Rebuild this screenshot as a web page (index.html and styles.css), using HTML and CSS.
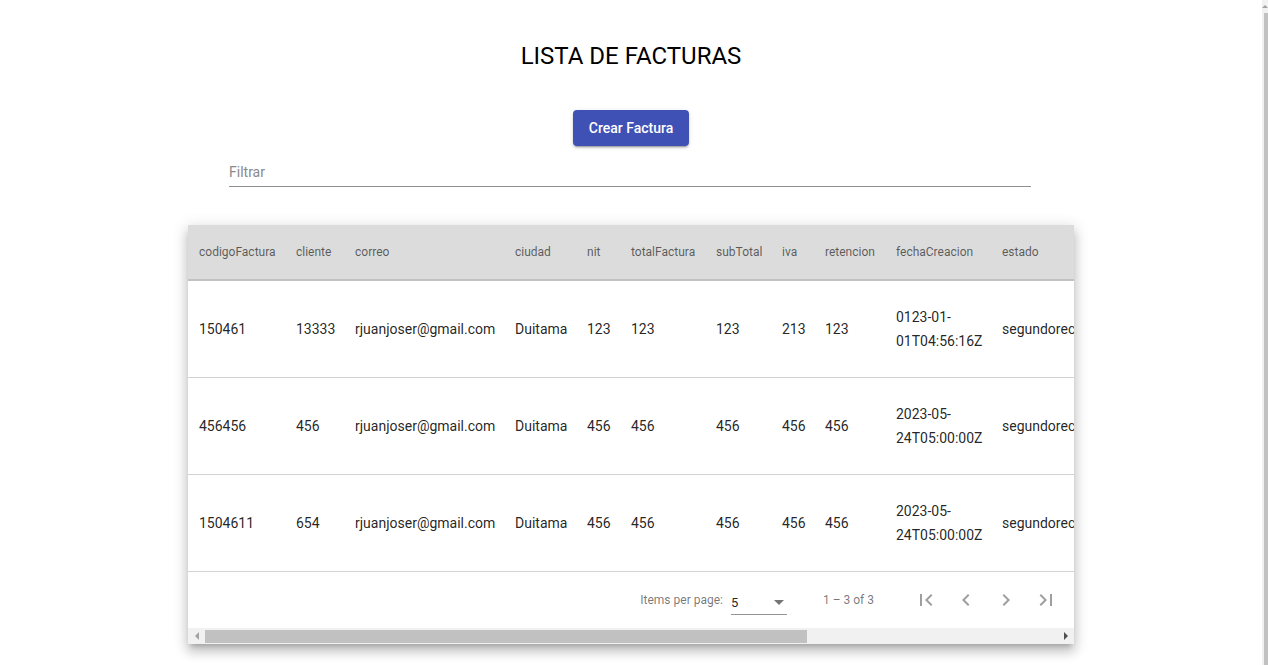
FILE: index.html
```html
<!DOCTYPE html>
<html lang="es">
<head>
<meta charset="utf-8">
<title>Lista de facturas</title>
<link rel="stylesheet" href="styles.css">
</head>
<body>
<div class="page">
  <main class="main">
    <h1 class="title">LISTA DE FACTURAS</h1>
    <button class="btn" type="button">Crear Factura</button>
    <div class="filter"><input class="filter-input" type="text" placeholder="Filtrar"></div>
    <div class="card">
      <div class="table-viewport">
        <table class="tbl">
          <colgroup>
            <col class="c1"><col class="c2"><col class="c3"><col class="c4"><col class="c5"><col class="c6"><col class="c7"><col class="c8"><col class="c9"><col class="c10"><col class="c11">
          </colgroup>
          <thead>
            <tr>
              <th>codigoFactura</th><th>cliente</th><th>correo</th><th>ciudad</th><th>nit</th><th>totalFactura</th><th>subTotal</th><th>iva</th><th>retencion</th><th>fechaCreacion</th><th>estado</th>
            </tr>
          </thead>
          <tbody>
            <tr>
              <td>150461</td><td>13333</td><td>rjuanjoser@gmail.com</td><td>Duitama</td><td>123</td><td>123</td><td>123</td><td>213</td><td>123</td><td>0123-01-<br>01T04:56:16Z</td><td>segundorecordatorio</td>
            </tr>
            <tr>
              <td>456456</td><td>456</td><td>rjuanjoser@gmail.com</td><td>Duitama</td><td>456</td><td>456</td><td>456</td><td>456</td><td>456</td><td>2023-05-<br>24T05:00:00Z</td><td>segundorecordatorio</td>
            </tr>
            <tr>
              <td>1504611</td><td>654</td><td>rjuanjoser@gmail.com</td><td>Duitama</td><td>456</td><td>456</td><td>456</td><td>456</td><td>456</td><td>2023-05-<br>24T05:00:00Z</td><td>segundorecordatorio</td>
            </tr>
          </tbody>
        </table>
      </div>
      <div class="paginator">
        <span class="pg-label">Items per page:</span>
        <div class="pg-select"><span class="pg-value">5</span><span class="pg-arrow"></span></div>
        <span class="pg-range">1 – 3 of 3</span>
        <button class="pg-btn" type="button" aria-label="First page"><svg viewBox="0 0 24 24" width="24" height="24"><path d="M18.41 16.59L13.82 12l4.59-4.59L17 6l-6 6 6 6zM6 6h2v12H6z"/></svg></button>
        <button class="pg-btn" type="button" aria-label="Previous page"><svg viewBox="0 0 24 24" width="24" height="24"><path d="M15.41 7.41L14 6l-6 6 6 6 1.41-1.41L10.83 12z"/></svg></button>
        <button class="pg-btn" type="button" aria-label="Next page"><svg viewBox="0 0 24 24" width="24" height="24"><path d="M10 6L8.59 7.41 13.17 12l-4.58 4.59L10 18l6-6z"/></svg></button>
        <button class="pg-btn" type="button" aria-label="Last page"><svg viewBox="0 0 24 24" width="24" height="24"><path d="M5.59 7.41L10.18 12l-4.59 4.59L7 18l6-6-6-6zM16 6h2v12h-2z"/></svg></button>
      </div>
      <div class="hscroll">
        <span class="hs-btn"><span class="tri-left"></span></span>
        <span class="hs-track"><span class="hs-thumb"></span></span>
        <span class="hs-btn"><span class="tri-right"></span></span>
      </div>
    </div>
  </main>
  <div class="vscroll">
    <div class="vs-btn"><span class="tri-up"></span></div>
    <div class="vs-thumb"></div>
  </div>
</div>
</body>
</html>
```
FILE: styles.css
```css
* { box-sizing: border-box; }
html, body { margin: 0; padding: 0; height: 100%; overflow: hidden; background: #fff; }
body { font-family: Roboto, "Liberation Sans", Arial, sans-serif; color: rgba(0,0,0,.87); }

.page { display: flex; height: 665px; }
.main { flex: 1; display: flex; flex-direction: column; align-items: center; min-width: 0; }

.title {
  margin: 40px 0 0;
  font-size: 24px;
  line-height: 32px;
  font-weight: 400;
  color: #000;
  letter-spacing: 0;
}

.btn {
  margin-top: 38px;
  height: 36px;
  padding: 0 16px;
  border: none;
  border-radius: 4px;
  background: #3f51b5;
  color: #fff;
  font-family: Roboto, "Liberation Sans", Arial, sans-serif;
  font-size: 14px;
  font-weight: 500;
  box-shadow: 0 3px 1px -2px rgba(0,0,0,.2), 0 2px 2px 0 rgba(0,0,0,.14), 0 1px 5px 0 rgba(0,0,0,.12);
}

.filter {
  margin-top: 16px;
  width: 802px;
  margin-right: 2px;
  border-bottom: 1px solid #8f8f8f;
  padding-bottom: 4px;
}
.filter-input {
  display: block;
  width: 100%;
  border: none;
  outline: none;
  padding: 0;
  height: 20px;
  font-family: Roboto, "Liberation Sans", Arial, sans-serif;
  font-size: 14px;
  background: transparent;
}
.filter-input::placeholder { color: #8a8a8a; }

.card {
  margin-top: 38px;
  width: 886px;
  background: #fff;
  box-shadow: 0 5px 5px -3px rgba(0,0,0,.2), 0 8px 10px 1px rgba(0,0,0,.14), 0 3px 14px 2px rgba(0,0,0,.12);
}

.table-viewport { width: 886px; overflow: hidden; }
.tbl {
  width: 1253px;
  table-layout: fixed;
  border-collapse: collapse;
  font-size: 14px;
}
.c1 { width: 108px; } .c2 { width: 59px; } .c3 { width: 160px; } .c4 { width: 72px; }
.c5 { width: 44px; } .c6 { width: 85px; } .c7 { width: 66px; } .c8 { width: 43px; }
.c9 { width: 71px; } .c10 { width: 106px; } .c11 { width: 439px; }

.tbl th, .tbl td { padding: 0; text-align: left; white-space: nowrap; vertical-align: middle; }
.tbl th:first-child, .tbl td:first-child { padding-left: 11px; }
.tbl thead tr { height: 55px; background: #dcdcdc; border-bottom: 2px solid #c2c2c2; }
.tbl th { font-size: 12px; font-weight: 400; color: rgba(0,0,0,.6); }
.tbl tbody tr { height: 97px; border-bottom: 1px solid #d3d3d3; }
.tbl td { color: rgba(0,0,0,.87); line-height: 24px; }

.paginator {
  display: flex;
  justify-content: flex-end;
  align-items: center;
  height: 56px;
  padding: 0 8px;
  font-size: 12px;
  color: rgba(0,0,0,.54);
}
.pg-label { margin: 0 4px; }
.pg-select {
  display: flex;
  align-items: center;
  justify-content: space-between;
  width: 56px;
  margin: 6px 12px 0 4px;
  height: 24px;
  border-bottom: 1px solid #949494;
  padding: 0 3px 0 0;
  color: rgba(0,0,0,.87);
  font-size: 13px;
}
.pg-arrow {
  width: 0; height: 0;
  border-left: 5px solid transparent;
  border-right: 5px solid transparent;
  border-top: 5px solid rgba(0,0,0,.54);
}
.pg-range { margin: 0 32px 0 24px; }
.pg-btn {
  width: 40px; height: 40px;
  border: none; background: transparent; padding: 0;
  display: flex; align-items: center; justify-content: center;
}
.pg-btn svg { fill: rgba(0,0,0,.38); }

.hscroll { display: flex; height: 16px; background: #f1f1f1; }
.hs-btn { width: 17px; display: flex; align-items: center; justify-content: center; }
.hs-track { flex: 1; padding: 2px 0 1px; }
.hs-thumb { display: block; width: 602px; height: 13px; background: #c1c1c1; }
.tri-left { width: 0; height: 0; border-top: 4px solid transparent; border-bottom: 4px solid transparent; border-right: 4px solid #a3a3a3; }
.tri-right { width: 0; height: 0; border-top: 4px solid transparent; border-bottom: 4px solid transparent; border-left: 4px solid #505050; }

.vscroll { width: 6px; background: #f1f1f1; display: flex; flex-direction: column; align-items: flex-end; }
.vs-btn { height: 13px; width: 6px; display: flex; align-items: center; justify-content: flex-end; }
.tri-up { width: 0; height: 0; border-left: 3px solid transparent; border-right: 3px solid transparent; border-bottom: 3px solid #a3a3a3; }
.vs-thumb { flex: 1; width: 4px; background: #c1c1c1; }
```
